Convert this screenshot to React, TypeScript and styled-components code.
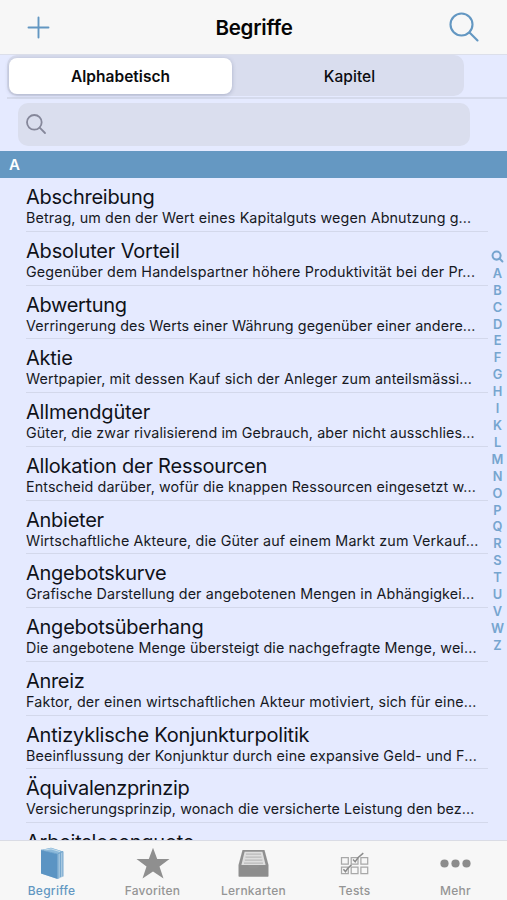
import React from "react";
import styled, { createGlobalStyle } from "styled-components";

const BLUE = "#6397c2";
const GREY = "#959595";

const Global = createGlobalStyle`
  * { box-sizing: border-box; }
  body { margin: 0; background: #e5eaff; font-family: Inter, "Liberation Sans", sans-serif; }
`;

const Screen = styled.div`
  width: 507px;
  height: 900px;
  display: flex;
  flex-direction: column;
  overflow: hidden;
  background: #e5eaff;
  color: #101219;
`;

const NavBar = styled.header`
  height: 55px;
  flex: none;
  display: grid;
  grid-template-columns: 80px 1fr 80px;
  align-items: center;
  background: #f7f7f7;
  border-bottom: 1px solid #dcdfea;
`;

const NavTitle = styled.h1`
  margin: 0;
  padding: 1px 0 0 1px;
  text-align: center;
  font-size: 20.5px;
  font-weight: 600;
  letter-spacing: -0.22px;
  color: #050505;
`;

const NavButton = styled.button<{ $side: "left" | "right" }>`
  display: flex;
  border: 0;
  background: none;
  padding: ${(p) => (p.$side === "left" ? "0 0 0 27px" : "0 0 0 22px")};
`;

const SegmentBar = styled.div`
  height: 44px;
  flex: none;
  padding-left: 7px;
`;

const SegmentLine = styled.div`
  height: 44px;
  border-bottom: 2px solid #d5daec;
`;

const Segments = styled.div`
  width: 457px;
  height: 41px;
  display: flex;
  padding: 3px 2px 2px;
  border-radius: 10px;
  background: #d9ddee;
`;

const Segment = styled.button<{ $active?: boolean }>`
  flex: ${(p) => (p.$active ? "0 0 223px" : "1")};
  border: 0;
  padding: 0;
  padding-left: ${(p) => (p.$active ? "0" : "5px")};
  border-radius: 8px;
  background: ${(p) => (p.$active ? "#fff" : "none")};
  box-shadow: ${(p) => (p.$active ? "0 1px 4px rgba(60, 70, 110, 0.3)" : "none")};
  font: ${(p) => (p.$active ? 600 : 500)} 15.5px Inter, "Liberation Sans", sans-serif;
  letter-spacing: 0.03px;
  color: #0b0b0e;
`;

const SearchArea = styled.div`
  height: 52px;
  flex: none;
  padding: 4px 37px 5px 18px;
`;

const SearchField = styled.div`
  height: 43px;
  padding: 0 0 2px 8px;
  display: flex;
  align-items: center;
  border-radius: 10px;
  background: #dadeee;
`;

const SectionHeader = styled.h2`
  height: 27px;
  flex: none;
  margin: 0;
  padding-left: 9px;
  background: #6598c2;
  color: #fff;
  font-size: 15px;
  line-height: 28px;
  font-weight: 600;
`;

const Content = styled.main`
  flex: 1;
  min-height: 0;
  display: flex;
  overflow: hidden;
`;

const List = styled.ul`
  width: 488px;
  margin: 0;
  padding: 0 0 0 26px;
  list-style: none;
`;

const Item = styled.li`
  height: 53.75px;
  padding-top: 7px;
  border-bottom: 1px solid #d3d8eb;
  white-space: nowrap;
`;

const Term = styled.div<{ $spacing: number }>`
  height: 24px;
  line-height: 24px;
  font-size: 20px;
  letter-spacing: ${(p) => p.$spacing}px;
`;

const Summary = styled.div<{ $spacing: number }>`
  height: 18px;
  line-height: 18px;
  font-size: 14.3px;
  letter-spacing: ${(p) => p.$spacing}px;
  color: #171923;
`;

const IndexBar = styled.nav`
  width: 19px;
  padding-top: 70px;
  display: flex;
  flex-direction: column;
  align-items: center;
`;

const IndexKey = styled.span`
  height: 16.92px;
  flex: none;
  display: flex;
  align-items: center;
  color: #76a5cf;
  font-size: 12.8px;
  font-weight: 600;
`;

const TabBar = styled.footer`
  height: 60px;
  flex: none;
  display: grid;
  grid-template-columns: repeat(5, 101px);
  padding: 0 1px;
  border-top: 1px solid #dadce5;
  background: #f7f7f7;
`;

const Tab = styled.button<{ $active?: boolean }>`
  display: flex;
  flex-direction: column;
  align-items: center;
  border: 0;
  padding: 3px 0 0;
  background: none;
  color: ${(p) => (p.$active ? BLUE : GREY)};
`;

const TabIcon = styled.span`
  height: 39px;
  display: flex;
  align-items: center;
`;

const TabLabel = styled.span`
  font: 500 12px/16px Inter, "Liberation Sans", sans-serif;
  letter-spacing: 0.25px;
`;

const PlusIcon = () => (
  <svg width="23" height="23" viewBox="0 0 23 23" stroke={BLUE} strokeWidth="1.9" strokeLinecap="round">
    <path d="M11.5 1.5V21.5M1.5 11.5H21.5" />
  </svg>
);

const Magnifier = ({ size, color, weight }: { size: number; color: string; weight: number }) => (
  <svg width={size} height={size} viewBox="0 0 30 30" fill="none" stroke={color} strokeWidth={weight} strokeLinecap="round" overflow="visible">
    <circle cx="12.5" cy="12.5" r="11" />
    <path d="M20.5 20.5L28.5 28.5" />
  </svg>
);

const BookIcon = () => (
  <svg width="24" height="33" viewBox="0 0 24 33">
    <path d="M1 3L11 .7L23 4.5V29.5L18 32L1 26.5Z" fill="#a7c8e0" />
    <path d="M1 3L17.5 7V32L1 26.5Z" fill="#5b94c3" />
    <path d="M1 3L11 .7L23 4.5L17.5 7Z" fill="#8cb9da" />
    <path d="M4 3.2L11 1.9L20 4.6" fill="none" stroke="#c3dceb" />
    <path d="M18 7V31.5M23 4.5V29.5M20.4 6V30" fill="none" stroke="#6b9fc9" strokeWidth=".9" />
    <path d="M1 3L17.5 7L23 4.5" fill="none" stroke="#6b9fc9" strokeWidth=".8" />
  </svg>
);

const StarIcon = () => (
  <svg width="34" height="33" viewBox="0 0 34 33">
    <path d="M17 .7L21.2 12H33.5L23.5 19.4L27.5 31.5L17 24.4L6.5 31.5L10.5 19.4L.5 12H12.8Z" fill="#8f8f8f" />
  </svg>
);

const TrayIcon = () => (
  <svg width="31" height="29" viewBox="0 0 31 29">
    <path d="M4.5 .9H26.5L30.5 16V27.6H.5V16Z" fill="#909090" />
    <path d="M6.6 2.8H24.4L27.6 16H3.4Z" fill="#dedede" />
    <path d="M8 5.2H23M7.4 8.2H23.6M6.8 11.2H24.4M6 14.2H25" stroke="#bababa" strokeWidth="1.2" />
    <path d="M1 16.3H9.5L11.5 19.3H19.5L21.5 16.3H30V27.6H1Z" fill="#8d8d8d" />
  </svg>
);

const TestsIcon = () => (
  <svg width="29" height="23" viewBox="0 0 29 23" fill="none" stroke="#a8a8a8" strokeWidth="1.25">
    <path d="M1.5 5.5H8.3V12H1.5ZM11.2 5.5H18V12H11.2ZM20.9 5.5H27.7V12H20.9ZM1.5 15H8.3V21.5H1.5ZM11.2 15H18V21.5H11.2ZM20.9 15H27.7V21.5H20.9Z" />
    <path d="M13 7.5L15.2 9.7Q18 5 23.3 1.2M3.4 17.3L5.5 19.6Q7.5 16 11.5 12.8" stroke="#8b8b8b" strokeWidth="1.5" />
  </svg>
);

const MoreIcon = () => (
  <svg width="31" height="9" viewBox="0 0 31 9" fill="#8c8c8c">
    <circle cx="4.5" cy="4.5" r="4.1" />
    <circle cx="15.5" cy="4.5" r="4.1" />
    <circle cx="26.5" cy="4.5" r="4.1" />
  </svg>
);

type Entry = { term: string; summary: string; ts: number; ss: number };

const entries: Entry[] = [
  { term: "Abschreibung", summary: "Betrag, um den der Wert eines Kapitalguts wegen Abnutzung g...", ts: -0.27, ss: 0.125 },
  { term: "Absoluter Vorteil", summary: "Gegenüber dem Handelspartner höhere Produktivität bei der Pr...", ts: -0.18, ss: 0.16 },
  { term: "Abwertung", summary: "Verringerung des Werts einer Währung gegenüber einer andere...", ts: -0.32, ss: 0.11 },
  { term: "Aktie", summary: "Wertpapier, mit dessen Kauf sich der Anleger zum anteilsmässi...", ts: -0.25, ss: 0.125 },
  { term: "Allmendgüter", summary: "Güter, die zwar rivalisierend im Gebrauch, aber nicht ausschlies...", ts: -0.2, ss: 0.105 },
  { term: "Allokation der Ressourcen", summary: "Entscheid darüber, wofür die knappen Ressourcen eingesetzt w...", ts: -0.23, ss: 0.125 },
  { term: "Anbieter", summary: "Wirtschaftliche Akteure, die Güter auf einem Markt zum Verkauf...", ts: -0.25, ss: 0.145 },
  { term: "Angebotskurve", summary: "Grafische Darstellung der angebotenen Mengen in Abhängigkei...", ts: -0.27, ss: 0.12 },
  { term: "Angebotsüberhang", summary: "Die angebotene Menge übersteigt die nachgefragte Menge, wei...", ts: -0.25, ss: 0.115 },
  { term: "Anreiz", summary: "Faktor, der einen wirtschaftlichen Akteur motiviert, sich für eine...", ts: -0.33, ss: 0.15 },
  { term: "Antizyklische Konjunkturpolitik", summary: "Beeinflussung der Konjunktur durch eine expansive Geld- und F...", ts: -0.2, ss: 0.125 },
  { term: "Äquivalenzprinzip", summary: "Versicherungsprinzip, wonach die versicherte Leistung den bez...", ts: -0.35, ss: 0.1 },
  { term: "Arbeitslosenquote", summary: "", ts: -0.24, ss: 0 },
];

const indexKeys = "ABCDEFGHIKLMNOPQRSTUVWZ".split("");

const tabs = [
  { label: "Begriffe", icon: <BookIcon /> },
  { label: "Favoriten", icon: <StarIcon /> },
  { label: "Lernkarten", icon: <TrayIcon /> },
  { label: "Tests", icon: <TestsIcon /> },
  { label: "Mehr", icon: <MoreIcon /> },
];

export default function App() {
  return (
    <Screen>
      <Global />
      <NavBar>
        <NavButton $side="left" aria-label="Hinzufügen"><PlusIcon /></NavButton>
        <NavTitle>Begriffe</NavTitle>
        <NavButton $side="right" aria-label="Suchen"><Magnifier size={30} color={BLUE} weight={2.1} /></NavButton>
      </NavBar>
      <SegmentBar>
        <SegmentLine>
          <Segments>
            <Segment $active>Alphabetisch</Segment>
            <Segment>Kapitel</Segment>
          </Segments>
        </SegmentLine>
      </SegmentBar>
      <SearchArea>
        <SearchField><Magnifier size={20} color="#85879a" weight={2.7} /></SearchField>
      </SearchArea>
      <SectionHeader>A</SectionHeader>
      <Content>
        <List>
          {entries.map((e) => (
            <Item key={e.term}>
              <Term $spacing={e.ts}>{e.term}</Term>
              <Summary $spacing={e.ss}>{e.summary}</Summary>
            </Item>
          ))}
        </List>
        <IndexBar>
          <IndexKey><Magnifier size={11} color="#76a5cf" weight={5.5} /></IndexKey>
          {indexKeys.map((k) => <IndexKey key={k}>{k}</IndexKey>)}
        </IndexBar>
      </Content>
      <TabBar>
        {tabs.map((t, i) => (
          <Tab key={t.label} $active={i === 0}>
            <TabIcon>{t.icon}</TabIcon>
            <TabLabel>{t.label}</TabLabel>
          </Tab>
        ))}
      </TabBar>
    </Screen>
  );
}
